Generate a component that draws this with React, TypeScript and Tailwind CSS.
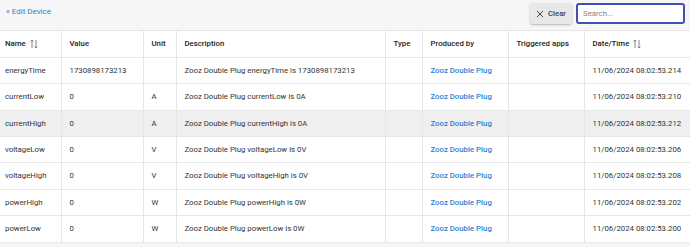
import React from 'react';

type EventRow = {
  name: string;
  value: string;
  unit: string;
  description: string;
  producedBy: string;
  date: string;
};

const rows: EventRow[] = [
  { name: 'energyTime', value: '1730898173213', unit: '', description: 'Zooz Double Plug energyTime is 1730898173213', producedBy: 'Zooz Double Plug', date: '11/06/2024 08:02:53.214' },
  { name: 'currentLow', value: '0', unit: 'A', description: 'Zooz Double Plug currentLow is 0A', producedBy: 'Zooz Double Plug', date: '11/06/2024 08:02:53.210' },
  { name: 'currentHigh', value: '0', unit: 'A', description: 'Zooz Double Plug currentHigh is 0A', producedBy: 'Zooz Double Plug', date: '11/06/2024 08:02:53.212' },
  { name: 'voltageLow', value: '0', unit: 'V', description: 'Zooz Double Plug voltageLow is 0V', producedBy: 'Zooz Double Plug', date: '11/06/2024 08:02:53.206' },
  { name: 'voltageHigh', value: '0', unit: 'V', description: 'Zooz Double Plug voltageHigh is 0V', producedBy: 'Zooz Double Plug', date: '11/06/2024 08:02:53.208' },
  { name: 'powerHigh', value: '0', unit: 'W', description: 'Zooz Double Plug powerHigh is 0W', producedBy: 'Zooz Double Plug', date: '11/06/2024 08:02:53.202' },
  { name: 'powerLow', value: '0', unit: 'W', description: 'Zooz Double Plug powerLow is 0W', producedBy: 'Zooz Double Plug', date: '11/06/2024 08:02:53.200' },
];

function SortIcon() {
  return (
    <svg width="8" height="10" viewBox="0 0 8 10" className="inline-block ml-[4px] -mt-[1px]" fill="none" stroke="#777" strokeWidth="0.9">
      <path d="M2 9V1M0.5 2.5L2 1L3.5 2.5" />
      <path d="M6 1v8M4.5 7.5L6 9L7.5 7.5" />
    </svg>
  );
}

export default function App() {
  return (
    <div className="w-[690px] h-[247px] bg-[#f6f6f6] text-[#333] overflow-hidden" style={{ fontFamily: 'Roboto, sans-serif' }}>
      {/* Верхняя панель */}
      <div className="h-[31px] flex items-start justify-between pl-[6px] pr-[5px] border-b border-[#e6e6e6]">
        <a className="mt-[6px] text-[8px] text-[#2b7fd4]">« Edit Device</a>
        <div className="flex items-center gap-[4px] mt-[3px]">
          <button className="h-[21px] w-[42px] flex items-center justify-center gap-[4px] bg-[#e8e8e8] rounded-[3px] shadow-[0_1px_2px_rgba(0,0,0,0.25)] text-[7.8px] font-medium text-[#444]">
            <svg width="8" height="8" viewBox="0 0 8 8" stroke="#444" strokeWidth="1">
              <path d="M1 1L7 7M7 1L1 7" />
            </svg>
            Clear
          </button>
          <div className="h-[21px] w-[109px] border-2 border-[#3f51b5] rounded-[3px] bg-white flex items-center pl-[5px] text-[7.8px] text-[#888]">
            Search...
          </div>
        </div>
      </div>

      {/* Таблица событий */}
      <table className="w-[690px] border-collapse bg-white text-[7.8px] table-fixed">
        <colgroup>
          <col className="w-[61px]" />
          <col className="w-[82px]" />
          <col className="w-[33px]" />
          <col className="w-[209px]" />
          <col className="w-[37px]" />
          <col className="w-[86px]" />
          <col className="w-[76px]" />
          <col className="w-[106px]" />
        </colgroup>
        <thead>
          <tr className="h-[26.4px] border-b border-[#e6e6e6] text-left font-medium text-[#222]">
            <th className="font-medium pl-[5px] border-r border-[#e6e6e6]">Name<SortIcon /></th>
            <th className="font-medium pl-[8px] border-r border-[#e6e6e6]">Value</th>
            <th className="font-medium pl-[8px] border-r border-[#e6e6e6]">Unit</th>
            <th className="font-medium pl-[8px] border-r border-[#e6e6e6]">Description</th>
            <th className="font-medium pl-[8px] border-r border-[#e6e6e6]">Type</th>
            <th className="font-medium pl-[8px] border-r border-[#e6e6e6]">Produced by</th>
            <th className="font-medium pl-[8px] border-r border-[#e6e6e6]">Triggered apps</th>
            <th className="font-medium pl-[8px] border-r border-[#e6e6e6]">Date/Time<SortIcon /></th>
          </tr>
        </thead>
        <tbody>
          {rows.map((r, i) => (
            <tr key={r.name} className={`h-[26.4px] border-b border-[#e6e6e6] ${i === 2 ? 'bg-[#efefef]' : 'bg-white'}`}>
              <td className="pl-[5px] border-r border-[#e6e6e6] whitespace-nowrap">{r.name}</td>
              <td className="pl-[8px] border-r border-[#e6e6e6]">{r.value}</td>
              <td className="pl-[8px] border-r border-[#e6e6e6]">{r.unit}</td>
              <td className="pl-[8px] border-r border-[#e6e6e6] whitespace-nowrap">{r.description}</td>
              <td className="pl-[8px] border-r border-[#e6e6e6]"></td>
              <td className="pl-[8px] border-r border-[#e6e6e6] text-[#2b7fd4] font-medium whitespace-nowrap">{r.producedBy}</td>
              <td className="pl-[8px] border-r border-[#e6e6e6]"></td>
              <td className="pl-[8px] border-r border-[#e6e6e6] whitespace-nowrap">{r.date}</td>
            </tr>
          ))}
        </tbody>
      </table>
    </div>
  );
}
